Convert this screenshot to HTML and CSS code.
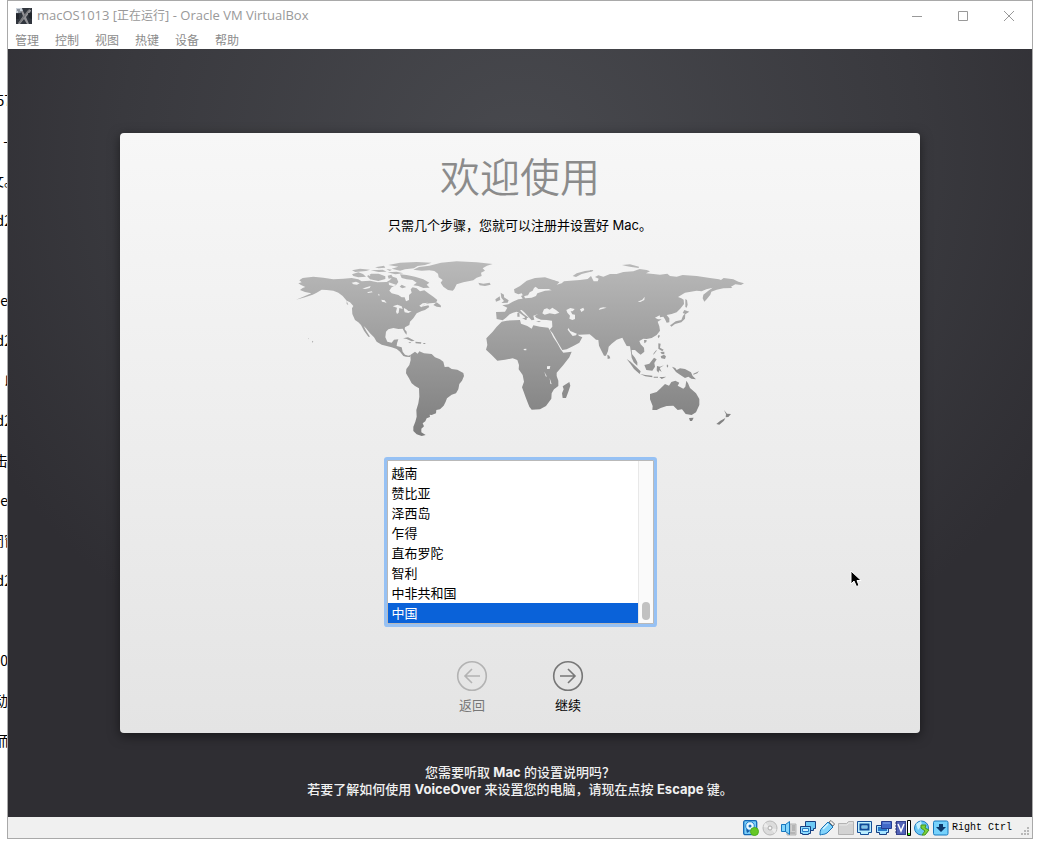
FILE: index.html
```html
<!DOCTYPE html>
<html lang="zh-CN">
<head>
<meta charset="utf-8">
<title>macOS1013 [正在运行] - Oracle VM VirtualBox</title>
<link rel="stylesheet" href="styles.css">
</head>
<body>
<div class="backdrop">
  <p class="wide">57</p><p>-</p><p class="wider">文。</p><p class="wide">d2</p><p></p><p>e</p><p class="wide">d2</p><p class="wider">以</p><p class="wide">d2</p><p>击</p><p>e</p><p class="wider">闭窗</p><p class="wide">d2</p><p></p><p>0</p><p>动</p><p class="wide">而</p>
</div>
<div class="window">
  <header class="titlebar">
    <svg class="app-icon" viewBox="0 0 16 16" aria-hidden="true">
      <rect width="16" height="16" fill="#30353d"/>
      <path d="M0 0h6l1 3-3 2H0z" fill="#c9d0d8"/>
      <path d="M1 2h3M2 4h4" stroke="#4a525e"/>
      <path d="M5 3h2l2 4 4-5h2v1l-5 6 3 7h-2L8 11l-4 5H2l5-8z" fill="#949498"/>
      <path d="M12 2l3-2-8 11-3 4H2z" fill="#77787c"/>
      <path d="M0 6h3v5H0zM12 5h4v6l-3-1z" fill="#22262c"/>
    </svg>
    <h1 class="window-title">macOS1013 [<span>正在运行</span>] - Oracle VM VirtualBox</h1>
    <div class="window-controls">
      <button type="button" aria-label="最小化"><svg viewBox="0 0 12 12"><path d="M1 6.500h10"/></svg></button>
      <button type="button" aria-label="最大化"><svg viewBox="0 0 12 12"><path d="M1.500 1.500h9v9h-9z"/></svg></button>
      <button type="button" aria-label="关闭"><svg viewBox="0 0 12 12"><path d="M1 1l10 10M11 1L1 11"/></svg></button>
    </div>
  </header>
  <nav class="menubar">
    <button type="button">管理</button><button type="button">控制</button><button type="button">视图</button><button type="button">热键</button><button type="button">设备</button><button type="button">帮助</button>
  </nav>
  <main class="screen">
    <section class="setup">
      <h2 class="setup-title">欢迎使用</h2>
      <p class="setup-text">只需几个步骤，您就可以注册并设置好 Mac。</p>
      <svg class="map" viewBox="0 0 1380 570" role="img" aria-label="世界地图">
        <defs>
          <linearGradient id="land" gradientUnits="userSpaceOnUse" x1="0" y1="30" x2="0" y2="560">
            <stop offset="0" stop-color="#bababa"/><stop offset="1" stop-color="#7d7d7d"/>
          </linearGradient>
        </defs>
        <g fill="url(#land)">
          <path d="M25 100L35 97 28 91 38 84 70 80 100 83 130 88 160 86 185 84 205 88 215 94 240 92 262 97 290 96 300 90 308 80 320 84 325 96 318 106 305 112 298 122 305 130 325 135 335 142 344 142 348 154 357 150 357 135 365 128 362 118 368 112 380 115 390 124 403 121 415 130 430 140 442 150 438 158 420 160 405 162 395 170 415 166 418 171 405 180 395 183 380 190 370 205 360 215 358 225 345 232 344 238 350 245 350 254 345 249 338 236 325 237 310 234 295 238 288 245 286 262 292 275 305 278 312 269 325 268 321 280 320 288 335 292 338 305 345 314 355 317 362 315 360 321 348 320 340 318 330 305 320 297 305 292 290 288 275 284 260 275 252 262 240 250 228 235 221 228 229 243 240 260 235 260 222 242 213 225 205 217 195 210 187 192 186 175 190 168 180 157 170 152 158 138 145 128 130 122 110 120 95 119 80 128 68 134 45 142 18 149 45 138 64 130 45 126 30 120 38 114 46 111 33 105Z"/>
          <path d="M295 45L330 38 380 36 425 38 405 45 383 48 372 55 345 58 330 62 305 56 325 50ZM186 73L205 67 219 72 228 80 205 82 190 78ZM231 78L244 71 266 71 286 79 286 87 265 93 240 88ZM186 61L210 56 240 59 228 63 196 66ZM255 52L282 47 286 53 266 55ZM242 61L278 59 290 65 266 66ZM292 67L320 65 340 70 316 73ZM289 57L306 59 299 63ZM330 73L350 75 375 80 400 88 418 98 410 104 419 113 400 114 385 108 370 106 380 98 368 90 350 88 335 84ZM293 77L304 74 310 83 296 86ZM335 104L349 111 337 115 329 110Z"/>
          <path d="M361 315L375 305 383 311 388 304 402 310 425 312 435 322 450 328 460 335 464 351 475 350 485 357 502 359 520 369 522 378 516 392 508 402 505 418 498 430 485 434 471 445 467 455 461 467 450 478 439 480 438 490 425 495 419 494 420 501 410 505 406 514 398 520 402 529 394 536 394 547 407 555 395 558 380 553 370 543 370 530 376 515 380 500 379 480 385 460 388 440 387 415 375 408 365 400 357 385 348 370 349 357 358 345 362 330Z"/>
          <path d="M370 59L387 51 418 47 453 38 500 34 560 37 608 42 591 47 578 55 585 62 573 68 575 78 560 83 550 91 520 97 500 103 493 117 488 122 474 120 460 110 452 98 458 90 446 82 444 71 433 63 418 61 395 62ZM565 98L580 101 599 98 602 104 585 108 569 106ZM430 165L440 157 452 166 453 172 440 170ZM339 265L354 262 374 272 365 274 350 267ZM376 275L394 277 393 281 377 280ZM400 279h6v3h-6ZM355 276l9 1-4 3ZM66 272l4 3-3 3ZM54 265l3 1-2 2ZM170 153l5 12-5-3Z"/>
          <path d="M618 186L645 185 652 173 637 166 655 163 668 155 685 148 698 146 693 138 701 134 705 145 725 143 738 138 742 130 765 122 785 121 776 117 745 117 735 109 747 101 770 93 790 91 808 97 800 104 815 100 822 94 840 92 870 90 893 87 903 78 911 94 923 94 926 86 915 81 925 76 940 80 960 72 980 72 1000 66 1030 64 1049 57 1070 60 1080 64 1068 70 1090 72 1110 74 1132 71 1140 78 1160 80 1178 75 1220 78 1260 84 1287 88 1293 90 1301 84 1330 88 1345 95 1362 100 1353 105 1336 103 1323 110 1327 114 1300 115 1280 119 1264 125 1261 134 1250 148 1243 155 1238 145 1240 134 1255 122 1268 113 1249 118 1235 124 1220 122 1185 128 1164 141 1174 145 1181 149 1182 162 1172 175 1160 187 1145 192 1130 195 1138 205 1138 217 1130 218 1125 208 1120 200 1110 202 1109 196 1095 203 1104 208 1115 208 1103 215 1108 229 1110 242 1100 255 1085 264 1070 267 1060 266 1048 273 1052 283 1062 293 1063 305 1052 314 1044 308 1035 300 1025 300 1026 312 1035 323 1042 337 1042 347 1031 337 1025 323 1023 308 1020 289 1010 288 1003 275 997 263 980 269 965 281 956 290 954 303 948 317 942 317 935 304 927 287 925 270 918 269 908 260 899 253 868 254 855 249 841 243 835 234 833 239 840 248 848 258 858 256 863 247 866 257 877 262 868 278 850 288 830 298 817 300 808 285 798 268 788 250 779 239 787 230 786 212 770 210 753 209 740 204 734 198 745 192 730 197 733 209 725 211 715 200 703 187 695 180 690 181 700 191 716 203 709 204 710 210 703 206 705 201 690 190 680 185 669 188 659 193 648 203 638 211 620 207Z"/>
          <g transform="translate(450)">
            <path d="M222 118L240 108 260 92 285 84 315 82 340 90 358 96 340 102 310 100 295 105 282 114 278 122 269 127 264 136 250 139 245 130 235 133 224 128ZM182 128L192 134 192 142 206 151 203 158 184 159 192 153 184 143ZM166 148L179 139 181 150 168 155ZM398 78L410 70 435 63 460 60 458 64 425 72 408 81ZM232 189l6-1 1 12-7 0ZM246 205l15-2-3 7ZM288 213l15 1-6 3Z"/>
            <path d="M170 230L185 215 200 212 240 210 243 221 262 228 275 236 280 226 300 230 325 233 332 245 340 262 352 280 362 298 370 308 395 305 388 322 370 345 350 368 350 378 355 392 355 408 342 418 335 430 334 446 318 468 300 478 275 479 268 470 258 445 246 412 252 395 248 375 236 358 237 345 232 330 218 325 195 329 172 332 155 315 138 299 142 285 139 265 158 245ZM388 396L391 407 385 425 378 444 368 444 366 430 371 418 368 409Z"/>
          </g>
          <g transform="translate(900)">
            <path d="M180 432L200 426 212 415 225 402 237 407 244 396 256 392 268 398 263 407 280 416 286 410 289 392 294 400 300 414 318 430 328 447 328 465 318 487 305 495 287 492 276 478 263 480 250 467 230 468 212 474 200 480 187 480 188 468 180 448ZM297 504L311 503 306 513 300 513ZM402 480L411 491 423 492 415 501 407 502 408 493ZM406 504L402 512 388 524 379 522 391 512ZM246 350L256 354 260 360 270 355 285 357 303 367 308 378 318 388 304 386 295 380 285 384 270 374 258 366ZM310 371l12-5 5-4-5 8-12 4Z"/>
            <path d="M163 345L178 341 192 323 200 328 193 339 195 350 187 362 169 360ZM110 327L122 335 138 350 152 364 149 372 132 357 121 341ZM150 372L166 375 187 377 187 382 166 379ZM191 380l13 0 0 3-13 0ZM208 381l9 0 12-1-14 7ZM201 348L210 350 222 346 209 354 215 366 208 361 205 368 200 361ZM231 343l4 4-2 6-3-4ZM205 280L212 281 210 293 221 299 217 304 205 296ZM211 306l12-1 0 8-8-1ZM212 319L222 314 228 319 225 327 214 325ZM200 302l-10 13 1-5 8-10ZM206 254L210 257 206 265 203 260ZM162 270L170 270 169 276 163 280ZM52 314L58 317 61 325 53 327ZM243 224L257 214 274 210 279 197 286 190 285 206 274 217 255 222 244 230 240 225ZM283 180L298 185 287 192 278 189ZM286 147L291 150 293 164 290 173 286 171ZM96 45L120 43 147 50 146 54 124 51 108 48ZM0 60l10 2-10 3Z"/>
          </g>
        </g>
        <g class="water">
          <path d="M185 98l13-3 11 5-8 4-11-1ZM217 116l12-4 13-4-3 6-13 3ZM231 127l14-3 3 3-13 2ZM264 131l6 4-4 2ZM274 149l10 2 6 9-6-3-8-2ZM308 169l14-5 13 5 3 8-10-3-2 14-5 4-3-7 3-12ZM342 174l7 4 6 5 10 1-10 5-11-2-2-7ZM388 167l10-7 16-2-12 6-8 8ZM235 67l6 10-4 0ZM296 97l24 8-9 4-14-4Z"/>
          <path d="M757 190L762 178 771 175 779 179 787 173 799 181 808 188 795 193 779 190 764 194ZM829 180L841 174 854 177 848 184 842 184 847 193 855 194 855 207 847 210 838 206 840 197 832 188ZM870 178l10-5 3 7-9 6ZM1043 155l14-6 7-9-1 10-12 6ZM926 179l4-5 10-2 10 1-11 3-11 3ZM771 349l10-1-2 9-8 0ZM763 365l8 15-4-1ZM779 384l6 19-4-2ZM700 297l9-1 0 5-6 0Z"/>
        </g>
      </svg>
      <div class="picker">
        <select class="countries" size="8" aria-label="国家或地区">
          <option>越南</option><option>赞比亚</option><option>泽西岛</option><option>乍得</option><option>直布罗陀</option><option>智利</option><option>中非共和国</option><option selected>中国</option>
        </select>
        <div class="track"><div class="thumb"></div></div>
      </div>
      <div class="actions">
        <button class="step" type="button" disabled>
          <svg viewBox="0 0 32 32" aria-hidden="true"><circle cx="16" cy="16" r="14.300"/><path d="M24 16H9M16 9l-7 7 7 7"/></svg>
          返回
        </button>
        <button class="step" type="button">
          <svg viewBox="0 0 32 32" aria-hidden="true"><circle cx="16" cy="16" r="14.300"/><path d="M8 16h15M16 9l7 7-7 7"/></svg>
          继续
        </button>
      </div>
      <svg class="cursor" viewBox="0 0 12 18" aria-hidden="true"><path d="M1 1v13l3-3 2.500 5.500 2.500-1L7 10.500h4.200z" fill="#000" stroke="#fff"/></svg>
    </section>
    <p class="hint">您需要听取 <b>Mac</b> 的设置说明吗？<br>若要了解如何使用 <b>VoiceOver</b> 来设置您的电脑，请现在点按 <b>Escape</b> 键。</p>
  </main>
  <footer class="statusbar">
    <svg viewBox="0 0 16 16" aria-hidden="true"><rect x=".7" y=".7" width="13" height="14" rx="1.500" fill="#79cdf8" stroke="#1267b5" stroke-width="1.300"/><circle cx="7" cy="6" r="4.300" fill="#edf9ff" stroke="#2382cf"/><circle cx="7" cy="6" r="1.500" fill="#1c75bd"/><path d="M3 9l4 2-3 2z" fill="#155ca5"/><circle cx="11.500" cy="11.500" r="4" fill="#65c725" stroke="#4fae1c"/></svg>
    <svg viewBox="0 0 16 16" aria-hidden="true"><circle cx="8" cy="8" r="7" fill="#dcdcdc" stroke="#b9b9b9"/><path d="M8 8L3 2.500 1.500 7zM8 8l5 5.500 1.500-4.500z" fill="#ececec"/><circle cx="8" cy="8" r="2" fill="#f8f8f8" stroke="#aaa"/></svg>
    <svg viewBox="0 0 16 16" aria-hidden="true"><path d="M9 4h6v11H6v-3h3z" fill="#d0d0d0" stroke="#b5b5b5"/><path d="M11 6h3M11 8h3M11 10h3M8 13h6" stroke="#999"/><path d="M.5 4.500h4l4-3v13l-4-3h-4z" fill="#83d5fb" stroke="#1777bf"/><path d="M4.500 4v8" stroke="#1777bf"/></svg>
    <svg viewBox="0 0 16 16" aria-hidden="true"><path d="M5.500 1.500h10v7h-2v2h-5v-2h-3z" fill="#6ec9f5" stroke="#173f82"/><path d="M.5 6.500h10v7h-2v1h-6v-1h-2z" fill="#8ddcff" stroke="#173f82"/><path d="M2.500 8.500h6v3h-6z" fill="#d3f3ff" stroke="#277bc5"/></svg>
    <svg viewBox="0 0 16 16" aria-hidden="true"><path d="M10 2l2-1.500 3.500 3.500-1.500 2z" fill="#eee" stroke="#777"/><path d="M3 8l6-6 5 5-6 6c-3 2-5 1-7 2 0-3 0-5 2-7z" fill="#83d4fb" stroke="#1770b6"/><path d="M4 9l5-5" stroke="#d8f6ff" stroke-width="1.500"/></svg>
    <svg viewBox="0 0 16 16" aria-hidden="true"><path d="M.5 3.500h8l2-2h5v13H.5z" fill="#d3d3d3" stroke="#b3b3b3"/><path d="M1 5h8l2-2h4" stroke="#e8e8e8" fill="none"/></svg>
    <svg viewBox="0 0 16 16" aria-hidden="true"><path d="M.5 1.500h14v11h-3v2h-8v-2h-3z" fill="#bcefff" stroke="#164e97"/><path d="M3.500 4.500h8v5h-8z" fill="#d9f7ff" stroke="#0d4a98" stroke-width="2"/><path d="M5 7h5" stroke="#7cc6ee" stroke-width="2"/></svg>
    <svg viewBox="0 0 16 16" aria-hidden="true"><path d="M.5 5.500h12v7h-2v2h-7v-2h-3z" fill="#a6e4ff" stroke="#173f82"/><path d="M2 7h9v4H2z" fill="#2878c8"/><path d="M5.500 1.500h10v7h-10z" fill="#4169c8" stroke="#263d91"/><path d="M7 3h7" stroke="#86a9ed"/></svg>
    <svg viewBox="0 0 16 16" aria-hidden="true"><rect x="1.500" y="1.500" width="9" height="13" fill="#5262b6" stroke="#35428e"/><path d="M0 3h2M0 6h2M0 9h2M0 12h2" stroke="#303a7d"/><path d="M3 4l3 7 3-7" fill="none" stroke="#fff" stroke-width="1.500"/><path d="M12.500.5h3v15h-3z" fill="#fff" stroke="#000"/><path d="M13 13h2v2h-2z" fill="#37df22"/></svg>
    <svg viewBox="0 0 16 16" aria-hidden="true"><circle cx="7.500" cy="8" r="7" fill="#67c7f5" stroke="#2179be"/><path d="M2 4l5-3 1 4-4 5z" fill="#c0efff"/><path d="M7 5h5l-1 3 4 2-4 5H8l3-4-4-3z" fill="#7bd139" stroke="#45951f"/></svg>
    <svg viewBox="0 0 16 16" aria-hidden="true"><rect x=".5" y="1" width="14.500" height="14" rx="1.500" fill="#76d2fc" stroke="#1678be"/><path d="M6 4h4v3h3l-5 5-5-5h3z" fill="#0d386a"/></svg>
    <span class="host-key">Right Ctrl</span>
    <svg class="grip" viewBox="0 0 9 9" aria-hidden="true"><path d="M6 0h2v2H6zM3 3h2v2H3zM6 3h2v2H6zM0 6h2v2H0zM3 6h2v2H3zM6 6h2v2H6z" fill="#b8b8b8"/></svg>
  </footer>
</div>
</body>
</html>
```
FILE: styles.css
```css
* { box-sizing: border-box; }
body {
  margin: 0;
  min-height: 100vh;
  padding: 0 7px 7px;
  display: flex;
  position: relative;
  background: #fff;
  color: #000;
  font-family: Inter, "Noto Sans CJK SC", sans-serif;
}
h1, h2, p { margin: 0; font-weight: 400; }
button { border: 0; padding: 0; background: none; font: inherit; color: inherit; }
.backdrop {
  position: absolute;
  inset: 80px auto 0 0;
  width: 20px;
  overflow: hidden;
  font: 14px/40px "Noto Sans CJK SC", sans-serif;
}
.backdrop p {
  height: 40px;
  width: 8px;
  display: flex;
  justify-content: flex-end;
  white-space: nowrap;
}
.backdrop .wide { width: 12px; }
.backdrop .wider { width: 18px; }
.window {
  flex: 1;
  min-width: 0;
  position: relative;
  display: flex;
  flex-direction: column;
  border: 1px solid #a9a9a9;
  background: #fff;
}
.titlebar {
  height: 29px;
  display: flex;
  align-items: center;
  gap: 5px;
  padding-left: 8px;
  color: #999;
}
.app-icon { width: 16px; height: 16px; }
.window-title {
  flex: 1;
  font: 13px/16px "Open Sans", "Noto Sans CJK SC", sans-serif;
}
.window-title span { font-size: 12px; }
.window-controls { display: flex; }
.window-controls button { width: 46px; height: 28px; display: grid; place-items: center; }
.window-controls svg { width: 12px; height: 12px; fill: none; stroke: #999; }
.menubar {
  height: 19px;
  display: flex;
  gap: 16px;
  padding-left: 7px;
  color: #8c8c8c;
  font: 12px/19px "Noto Sans CJK SC", sans-serif;
}
.screen {
  flex: 1;
  display: flex;
  flex-direction: column;
  align-items: center;
  padding: 84px 24px 0;
  background: radial-gradient(ellipse 60% 75% at 50% 14%, #48494e, #39393e 65%, #2f2e33);
}
.setup {
  position: relative;
  width: 100%;
  max-width: 800px;
  min-height: 600px;
  display: flex;
  flex-direction: column;
  align-items: center;
  padding-top: 21px;
  border-radius: 4px;
  background: linear-gradient(#f7f7f7, #e4e4e4);
  box-shadow: 0 3px 12px rgba(0, 0, 0, .5);
}
.setup-title { color: #8b8b8b; font-size: 40px; line-height: 48px; font-weight: 350; }
.setup-text { margin-top: 13px; font-size: 13px; line-height: 20px; }
.map { width: 460px; max-width: 100%; margin-top: 15px; }
.water { fill: #f0f0f0; }
.picker {
  width: 267px;
  height: 164px;
  margin-top: 20px;
  display: flex;
  border: 1px solid #b9b9b9;
  border-radius: 1px;
  background: #fff;
  box-shadow: 0 0 0 3px #96c1f4;
}
.countries {
  flex: 1;
  height: 162px;
  padding: 2px 0 0;
  border: 0;
  border-radius: 0;
  outline: 0;
  overflow: hidden;
  background: #fff;
  font: 13px/20px "Noto Sans CJK SC", sans-serif;
}
.countries option { min-height: 20px; height: 20px; padding: 0 4px; color: #000; }
.countries option:checked { background: linear-gradient(#0a62d9, #0a62d9); color: #fff; }
.track {
  width: 15px;
  display: flex;
  align-items: flex-end;
  padding: 0 3px 3px;
  border-left: 1px solid #e8e8e8;
  background: #fafafa;
}
.thumb { width: 8px; height: 18px; border-radius: 4px; background: #c1c1c1; }
.actions { display: flex; gap: 64px; margin-top: 36px; }
.step {
  width: 32px;
  display: flex;
  flex-direction: column;
  align-items: center;
  gap: 3px;
  font-size: 13px;
  line-height: 20px;
  white-space: nowrap;
}
.step svg { width: 32px; height: 32px; fill: none; stroke: #777; stroke-width: 1.6; }
.step:disabled { color: #777; }
.step:disabled svg { stroke: #b3b3b3; }
.cursor { position: absolute; left: 730px; top: 437px; width: 12px; height: 18px; }
.hint {
  margin-top: 31px;
  color: #f1f1f1;
  text-align: center;
  font-size: 13px;
  line-height: 17px;
  font-weight: 500;
}
.hint b { font-weight: 700; }
.statusbar {
  height: 21px;
  display: flex;
  align-items: center;
  justify-content: flex-end;
  gap: 3px;
  padding-right: 2px;
  background: #f0f0f0;
}
.statusbar svg { width: 16px; height: 16px; }
.host-key { font: 10px/16px "Liberation Mono", monospace; }
.statusbar .grip { width: 9px; height: 9px; margin: 7px 0 0 6px; }
```
